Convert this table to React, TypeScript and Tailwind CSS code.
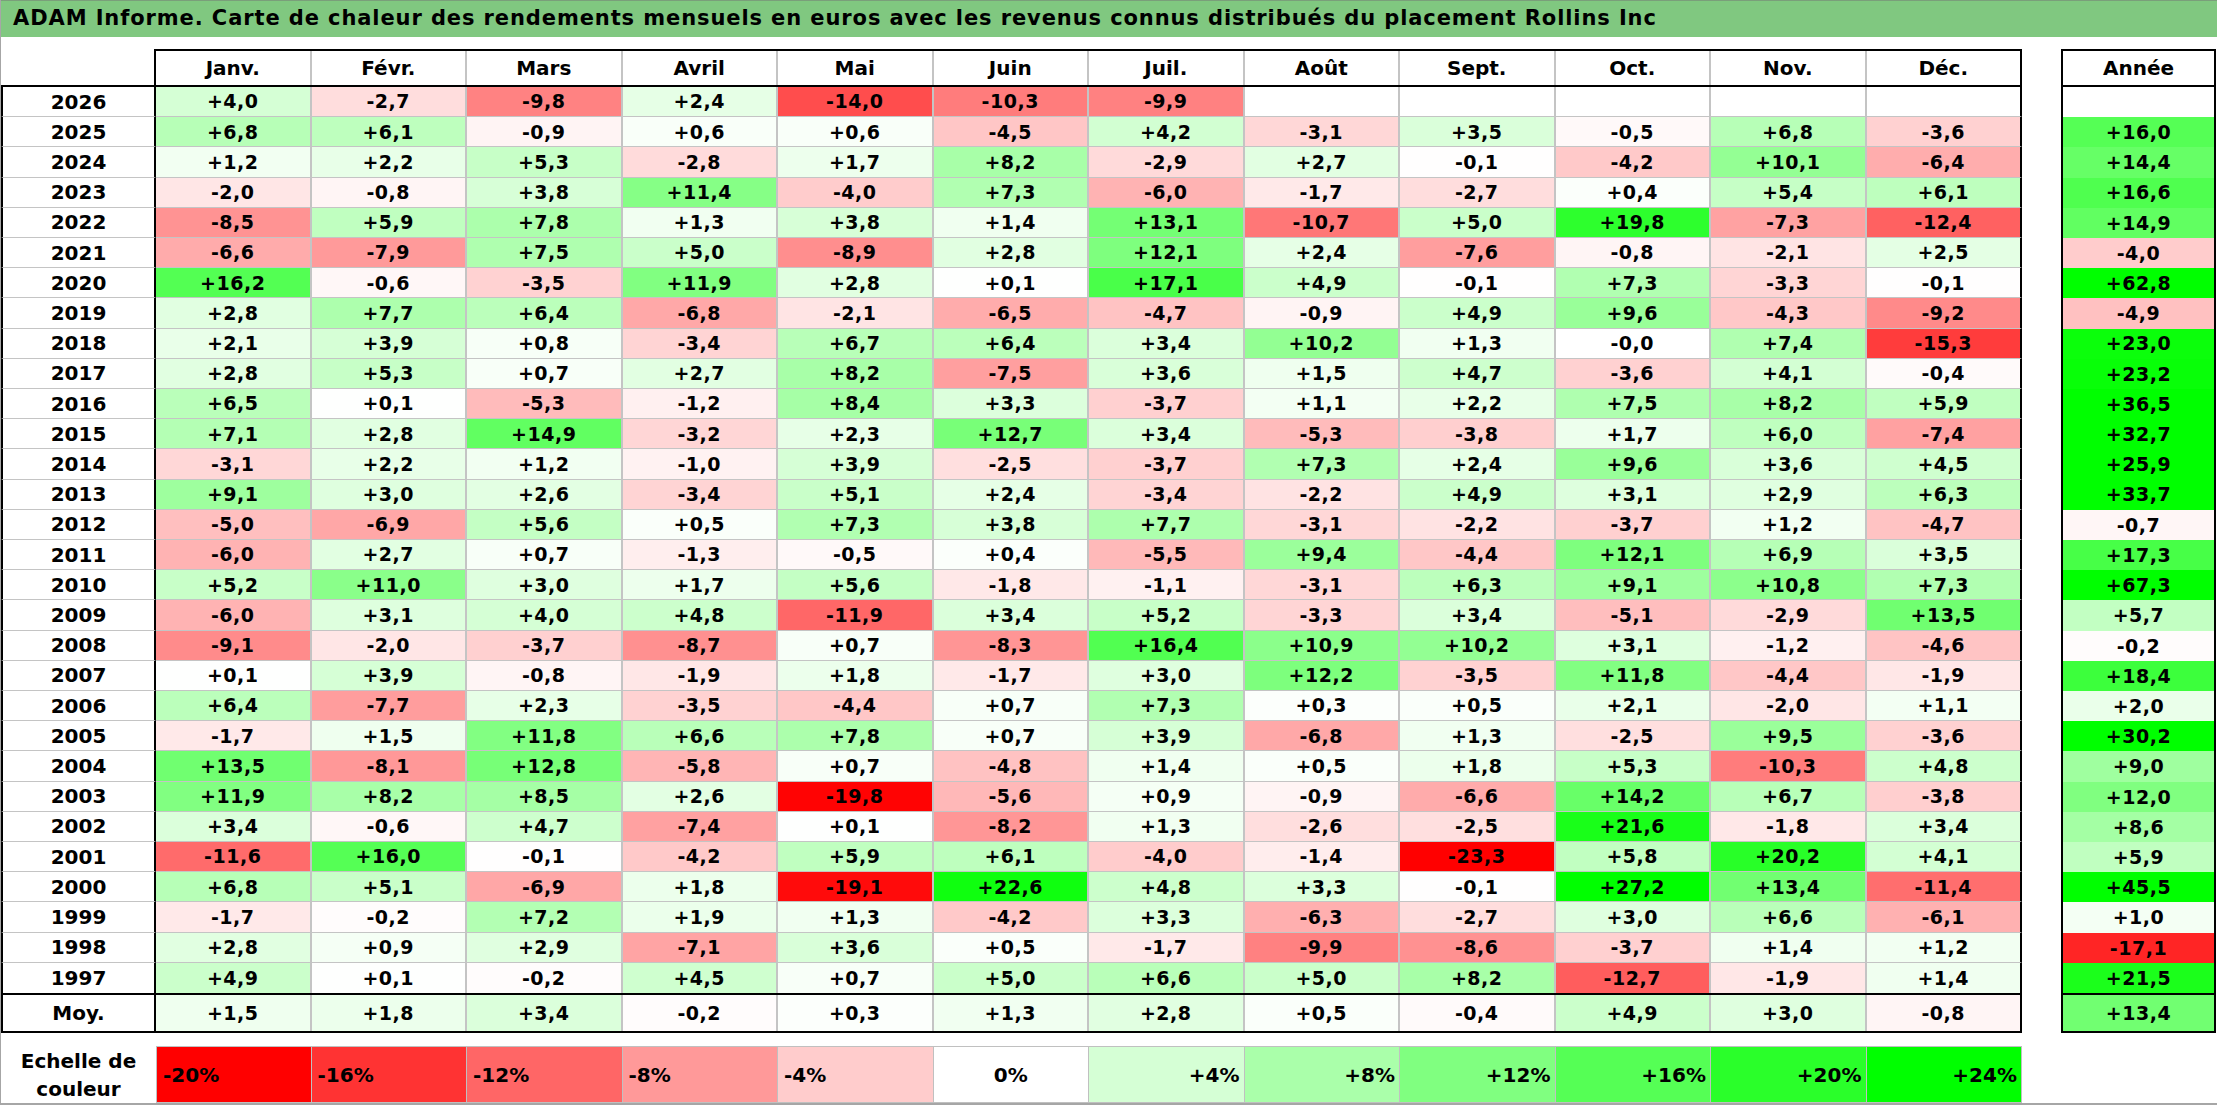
const months = ["Janv.", "Févr.", "Mars", "Avril", "Mai", "Juin", "Juil.", "Août", "Sept.", "Oct.", "Nov.", "Déc."];

interface YearRow {
    year: string;
    values: string[];
    total: string;
}

const rows: YearRow[] = [
    { year: "2026", values: ["+4,0", "-2,7", "-9,8", "+2,4", "-14,0", "-10,3", "-9,9", "", "", "", "", ""], total: "" },
    { year: "2025", values: ["+6,8", "+6,1", "-0,9", "+0,6", "+0,6", "-4,5", "+4,2", "-3,1", "+3,5", "-0,5", "+6,8", "-3,6"], total: "+16,0" },
    { year: "2024", values: ["+1,2", "+2,2", "+5,3", "-2,8", "+1,7", "+8,2", "-2,9", "+2,7", "-0,1", "-4,2", "+10,1", "-6,4"], total: "+14,4" },
    { year: "2023", values: ["-2,0", "-0,8", "+3,8", "+11,4", "-4,0", "+7,3", "-6,0", "-1,7", "-2,7", "+0,4", "+5,4", "+6,1"], total: "+16,6" },
    { year: "2022", values: ["-8,5", "+5,9", "+7,8", "+1,3", "+3,8", "+1,4", "+13,1", "-10,7", "+5,0", "+19,8", "-7,3", "-12,4"], total: "+14,9" },
    { year: "2021", values: ["-6,6", "-7,9", "+7,5", "+5,0", "-8,9", "+2,8", "+12,1", "+2,4", "-7,6", "-0,8", "-2,1", "+2,5"], total: "-4,0" },
    { year: "2020", values: ["+16,2", "-0,6", "-3,5", "+11,9", "+2,8", "+0,1", "+17,1", "+4,9", "-0,1", "+7,3", "-3,3", "-0,1"], total: "+62,8" },
    { year: "2019", values: ["+2,8", "+7,7", "+6,4", "-6,8", "-2,1", "-6,5", "-4,7", "-0,9", "+4,9", "+9,6", "-4,3", "-9,2"], total: "-4,9" },
    { year: "2018", values: ["+2,1", "+3,9", "+0,8", "-3,4", "+6,7", "+6,4", "+3,4", "+10,2", "+1,3", "-0,0", "+7,4", "-15,3"], total: "+23,0" },
    { year: "2017", values: ["+2,8", "+5,3", "+0,7", "+2,7", "+8,2", "-7,5", "+3,6", "+1,5", "+4,7", "-3,6", "+4,1", "-0,4"], total: "+23,2" },
    { year: "2016", values: ["+6,5", "+0,1", "-5,3", "-1,2", "+8,4", "+3,3", "-3,7", "+1,1", "+2,2", "+7,5", "+8,2", "+5,9"], total: "+36,5" },
    { year: "2015", values: ["+7,1", "+2,8", "+14,9", "-3,2", "+2,3", "+12,7", "+3,4", "-5,3", "-3,8", "+1,7", "+6,0", "-7,4"], total: "+32,7" },
    { year: "2014", values: ["-3,1", "+2,2", "+1,2", "-1,0", "+3,9", "-2,5", "-3,7", "+7,3", "+2,4", "+9,6", "+3,6", "+4,5"], total: "+25,9" },
    { year: "2013", values: ["+9,1", "+3,0", "+2,6", "-3,4", "+5,1", "+2,4", "-3,4", "-2,2", "+4,9", "+3,1", "+2,9", "+6,3"], total: "+33,7" },
    { year: "2012", values: ["-5,0", "-6,9", "+5,6", "+0,5", "+7,3", "+3,8", "+7,7", "-3,1", "-2,2", "-3,7", "+1,2", "-4,7"], total: "-0,7" },
    { year: "2011", values: ["-6,0", "+2,7", "+0,7", "-1,3", "-0,5", "+0,4", "-5,5", "+9,4", "-4,4", "+12,1", "+6,9", "+3,5"], total: "+17,3" },
    { year: "2010", values: ["+5,2", "+11,0", "+3,0", "+1,7", "+5,6", "-1,8", "-1,1", "-3,1", "+6,3", "+9,1", "+10,8", "+7,3"], total: "+67,3" },
    { year: "2009", values: ["-6,0", "+3,1", "+4,0", "+4,8", "-11,9", "+3,4", "+5,2", "-3,3", "+3,4", "-5,1", "-2,9", "+13,5"], total: "+5,7" },
    { year: "2008", values: ["-9,1", "-2,0", "-3,7", "-8,7", "+0,7", "-8,3", "+16,4", "+10,9", "+10,2", "+3,1", "-1,2", "-4,6"], total: "-0,2" },
    { year: "2007", values: ["+0,1", "+3,9", "-0,8", "-1,9", "+1,8", "-1,7", "+3,0", "+12,2", "-3,5", "+11,8", "-4,4", "-1,9"], total: "+18,4" },
    { year: "2006", values: ["+6,4", "-7,7", "+2,3", "-3,5", "-4,4", "+0,7", "+7,3", "+0,3", "+0,5", "+2,1", "-2,0", "+1,1"], total: "+2,0" },
    { year: "2005", values: ["-1,7", "+1,5", "+11,8", "+6,6", "+7,8", "+0,7", "+3,9", "-6,8", "+1,3", "-2,5", "+9,5", "-3,6"], total: "+30,2" },
    { year: "2004", values: ["+13,5", "-8,1", "+12,8", "-5,8", "+0,7", "-4,8", "+1,4", "+0,5", "+1,8", "+5,3", "-10,3", "+4,8"], total: "+9,0" },
    { year: "2003", values: ["+11,9", "+8,2", "+8,5", "+2,6", "-19,8", "-5,6", "+0,9", "-0,9", "-6,6", "+14,2", "+6,7", "-3,8"], total: "+12,0" },
    { year: "2002", values: ["+3,4", "-0,6", "+4,7", "-7,4", "+0,1", "-8,2", "+1,3", "-2,6", "-2,5", "+21,6", "-1,8", "+3,4"], total: "+8,6" },
    { year: "2001", values: ["-11,6", "+16,0", "-0,1", "-4,2", "+5,9", "+6,1", "-4,0", "-1,4", "-23,3", "+5,8", "+20,2", "+4,1"], total: "+5,9" },
    { year: "2000", values: ["+6,8", "+5,1", "-6,9", "+1,8", "-19,1", "+22,6", "+4,8", "+3,3", "-0,1", "+27,2", "+13,4", "-11,4"], total: "+45,5" },
    { year: "1999", values: ["-1,7", "-0,2", "+7,2", "+1,9", "+1,3", "-4,2", "+3,3", "-6,3", "-2,7", "+3,0", "+6,6", "-6,1"], total: "+1,0" },
    { year: "1998", values: ["+2,8", "+0,9", "+2,9", "-7,1", "+3,6", "+0,5", "-1,7", "-9,9", "-8,6", "-3,7", "+1,4", "+1,2"], total: "-17,1" },
    { year: "1997", values: ["+4,9", "+0,1", "-0,2", "+4,5", "+0,7", "+5,0", "+6,6", "+5,0", "+8,2", "-12,7", "-1,9", "+1,4"], total: "+21,5" },
];

const averages = ["+1,5", "+1,8", "+3,4", "-0,2", "+0,3", "+1,3", "+2,8", "+0,5", "-0,4", "+4,9", "+3,0", "-0,8"];
const averageTotal = "+13,4";

const scale = [
    { label: "-20%", bg: "#ff0000", align: "justify-start pl-[6px]" },
    { label: "-16%", bg: "#ff3333", align: "justify-start pl-[6px]" },
    { label: "-12%", bg: "#ff6666", align: "justify-start pl-[6px]" },
    { label: "-8%", bg: "#ff9999", align: "justify-start pl-[6px]" },
    { label: "-4%", bg: "#ffcccc", align: "justify-start pl-[6px]" },
    { label: "0%", bg: "#ffffff", align: "justify-center" },
    { label: "+4%", bg: "#d5ffd5", align: "justify-end pr-[4px]" },
    { label: "+8%", bg: "#aaffaa", align: "justify-end pr-[4px]" },
    { label: "+12%", bg: "#80ff80", align: "justify-end pr-[4px]" },
    { label: "+16%", bg: "#55ff55", align: "justify-end pr-[4px]" },
    { label: "+20%", bg: "#2aff2a", align: "justify-end pr-[4px]" },
    { label: "+24%", bg: "#00ff00", align: "justify-end pr-[4px]" },
];

// rouge jusqu'a -20 %, vert jusqu'a +24 %
const getCellColor = (value: string) => {
    if (!value) return "#ffffff";
    const v = parseFloat(value.replace(",", "."));
    if (v < 0) {
        const c = Math.round(255 * (1 - Math.min(-v / 20, 1)));
        return `rgb(255, ${c}, ${c})`;
    }
    const c = Math.round(255 * (1 - Math.min(v / 24, 1)));
    return `rgb(${c}, 255, ${c})`;
};

export default function App() {
    return (
        <div className="w-[2217px] h-[1105px] overflow-hidden bg-white text-black font-['DejaVu_Sans',sans-serif] font-bold border-l border-b-2 border-[#a6a6a6]">
            {/* Titre */}
            <div className="h-[37px] bg-[#80c880] border-t border-[#7a9f7a] flex items-center pl-[12px] text-[21px] tracking-[0.9px] whitespace-nowrap">
                ADAM Informe. Carte de chaleur des rendements mensuels en euros avec les revenus connus distribués du placement Rollins Inc
            </div>

            <div className="flex mt-[12px]">
                {/* Tableau principal */}
                <div className="w-[2021px]">
                    <div className="flex h-[38px] text-[20px]">
                        <div className="w-[155px] border-r-2 border-b-2 border-black" />
                        <div className="flex-1 grid grid-cols-12 border-t-2 border-b-2 border-black">
                            {months.map((m, i) => (
                                <div
                                    key={m}
                                    className={`flex items-center justify-center border-r-2 ${i === 11 ? "border-black" : "border-[#c4c4c4]"}`}
                                >
                                    {m}
                                </div>
                            ))}
                        </div>
                    </div>

                    <div className="h-[908px] grid grid-cols-[155px_repeat(12,minmax(0,1fr))] grid-rows-[repeat(30,minmax(0,1fr))] border-b-2 border-black">
                        {rows.map((row, r) => {
                            const sep = r < rows.length - 1 ? "border-b border-b-[#c4c4c4]" : "";
                            return [
                                <div
                                    key={row.year}
                                    className={`flex items-center justify-center text-[20px] border-l-2 border-r-2 border-l-black border-r-black ${sep}`}
                                >
                                    {row.year}
                                </div>,
                                ...row.values.map((v, i) => (
                                    <div
                                        key={`${row.year}-${i}`}
                                        className={`flex items-center justify-center text-[19px] tracking-[0.5px] border-r-2 ${i === 11 ? "border-r-black" : "border-r-[#c4c4c4]"} ${sep}`}
                                        style={{ backgroundColor: getCellColor(v) }}
                                    >
                                        {v}
                                    </div>
                                )),
                            ];
                        })}
                    </div>

                    <div className="h-[38px] grid grid-cols-[155px_repeat(12,minmax(0,1fr))] border-b-2 border-black">
                        <div className="flex items-center justify-center text-[20px] border-l-2 border-r-2 border-black">
                            Moy.
                        </div>
                        {averages.map((v, i) => (
                            <div
                                key={i}
                                className={`flex items-center justify-center text-[19px] tracking-[0.5px] border-r-2 ${i === 11 ? "border-black" : "border-[#c4c4c4]"}`}
                                style={{ backgroundColor: getCellColor(v) }}
                            >
                                {v}
                            </div>
                        ))}
                    </div>

                    {/* Echelle */}
                    <div className="mt-[13px] h-[57px] grid grid-cols-[155px_repeat(12,minmax(0,1fr))]">
                        <div className="flex flex-col items-center justify-center text-[20px] leading-[28px]">
                            <span>Echelle de</span>
                            <span>couleur</span>
                        </div>
                        {scale.map((s, i) => (
                            <div
                                key={s.label}
                                className={`flex items-center text-[20px] border-y border-r border-[#c0c0c0] ${i === 0 ? "border-l" : ""} ${s.align}`}
                                style={{ backgroundColor: s.bg }}
                            >
                                {s.label}
                            </div>
                        ))}
                    </div>
                </div>

                {/* Colonne Année */}
                <div className="ml-[39px] w-[155px]">
                    <div className="h-[38px] flex items-center justify-center text-[20px] border-2 border-black">Année</div>
                    <div className="flex flex-col h-[908px] border-x-2 border-b-2 border-black">
                        {rows.map((row) => (
                            <div
                                key={row.year}
                                className="flex-1 min-h-0 flex items-center justify-center text-[19px] tracking-[0.5px]"
                                style={{ backgroundColor: getCellColor(row.total) }}
                            >
                                {row.total}
                            </div>
                        ))}
                    </div>
                    <div
                        className="h-[38px] flex items-center justify-center text-[19px] tracking-[0.5px] border-x-2 border-b-2 border-black"
                        style={{ backgroundColor: getCellColor(averageTotal) }}
                    >
                        {averageTotal}
                    </div>
                </div>
            </div>
        </div>
    );
}
